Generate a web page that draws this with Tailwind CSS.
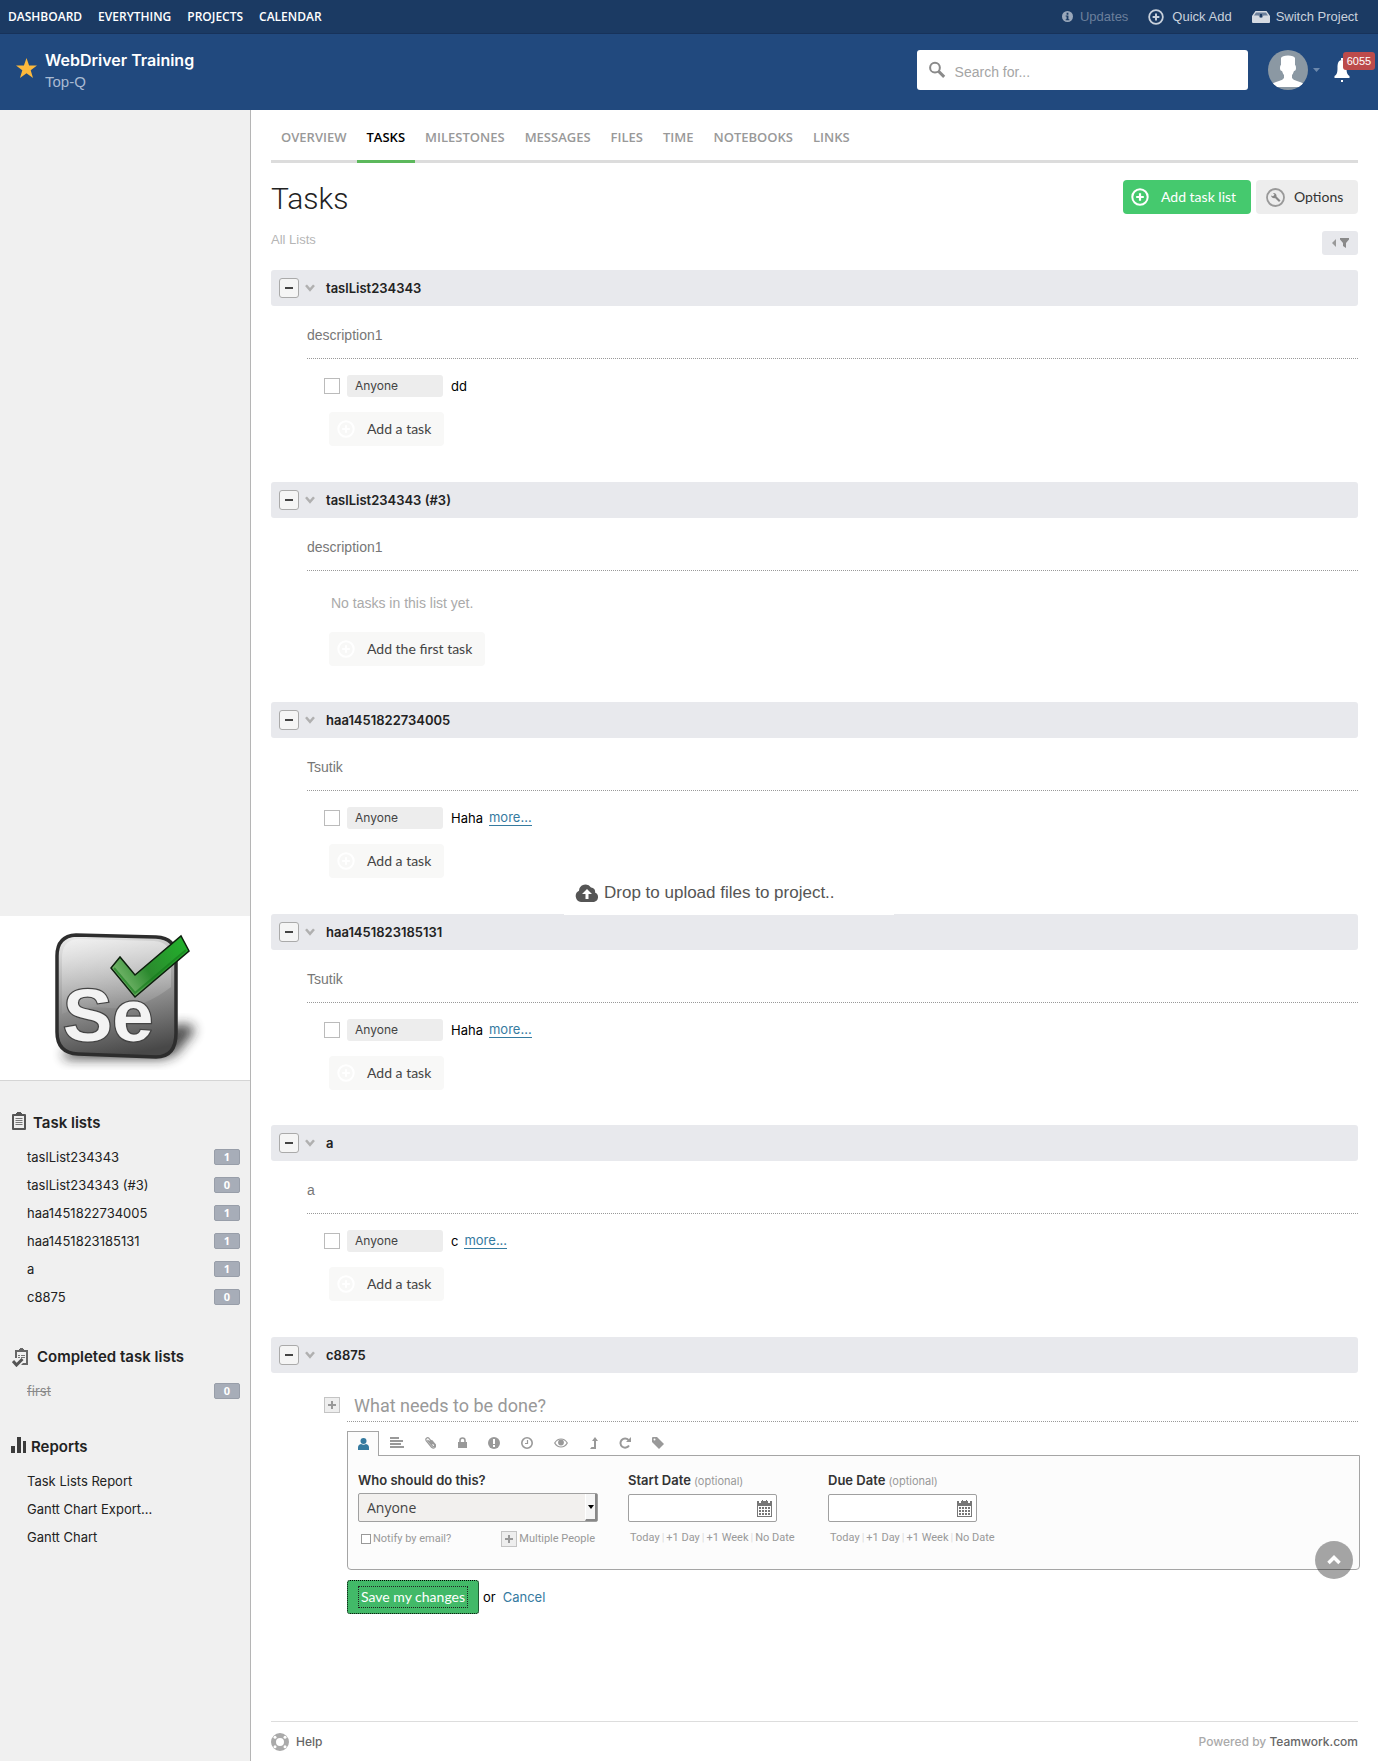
<!DOCTYPE html>
<html lang="en">
<head>
<meta charset="utf-8">
<meta name="viewport" content="width=device-width, initial-scale=1">
<title>Tasks - WebDriver Training</title>
<script src="https://cdn.jsdelivr.net/npm/@tailwindcss/browser@4"></script>
</head>
<body class="relative flex min-h-screen flex-col bg-white font-['Inter',sans-serif] text-[13px] leading-5 text-[#222]">

<!-- Shared icons -->
<svg class="hidden">
  <symbol id="plus-circle" viewBox="0 0 18 18"><circle cx="9" cy="9" r="7.7" fill="none" stroke="currentColor" stroke-width="2"/><path d="M9 5.2v7.6M5.2 9h7.6" stroke="currentColor" stroke-width="2.2"/></symbol>
  <symbol id="chevron" viewBox="0 0 10 8"><path d="M1 1.2l4 4.6 4-4.6" fill="none" stroke="currentColor" stroke-width="2.500"/></symbol>
  <symbol id="minus" viewBox="0 0 8 2"><path d="M0 0h8v2H0z" fill="currentColor"/></symbol>
  <symbol id="plus" viewBox="0 0 8 8"><path d="M3 0h2v3h3v2H5v3H3V5H0V3h3z" fill="currentColor"/></symbol>
  <symbol id="calendar" viewBox="0 0 15 17"><path d="M0 1h2v2h2V1h1V0h1v1h3V0h1v1h1v2h2V1h2v16H0z" fill="#777"/><path d="M1 6h13v10H1z" fill="#fff"/><path d="M2 7h2v2H2zM5 7h2v2H5zM8 7h2v2H8zM11 7h2v2h-2zM2 10h2v2H2zM5 10h2v2H5zM8 10h2v2H8zM11 10h2v2h-2zM2 13h2v2H2zM5 13h2v2H5zM8 13h2v2H8zM11 13h2v2h-2z" fill="#777"/></symbol>
</svg>

<!-- Top bar -->
<nav class="flex h-[34px] items-center justify-between border-b border-[#17325a] bg-[#1b3a63] pr-5 pl-2 text-white">
  <div class="flex gap-4 font-['Open_Sans',sans-serif] text-xs font-semibold">
    <a href="#">DASHBOARD</a><a href="#">EVERYTHING</a><a href="#">PROJECTS</a><a href="#">CALENDAR</a>
  </div>
  <div class="flex items-center font-['Liberation_Sans',sans-serif] text-[13px] text-[#c9d1dc]">
    <a href="#" class="mr-5 flex items-center gap-[7px] text-[#6b7f9b]">
      <svg class="size-[11px]" viewBox="0 0 12 12"><circle cx="6" cy="6" r="6" fill="#9aa8bb"/><path d="M5 2h2v2H5zM4 5h3v4h1v1H4V9h1V6H4z" fill="#1b3a63"/></svg>Updates</a>
    <a href="#" class="mr-5 flex items-center gap-2"><svg class="size-4"><use href="#plus-circle"/></svg>Quick Add</a>
    <a href="#" class="flex items-center gap-[6px]">
      <svg class="h-3 w-[18px]" viewBox="0 0 18 12"><path d="M3.500 0h11L18 5v6a1 1 0 0 1-1 1H1a1 1 0 0 1-1-1V5z" fill="#d5dae2"/><path d="M4 1.500h10l2 3h-4.500L10 7H8L6.500 4.500H2z" fill="#6b7f9b"/><path d="M8 3h2v3H8z" fill="#1b3a63"/></svg>Switch Project</a>
  </div>
</nav>

<!-- Project header -->
<header class="flex h-[76px] items-start justify-between bg-[#21497e] pt-4">
  <div class="flex pl-4">
    <svg class="mt-2 h-5 w-[21px]" viewBox="0 0 21 20"><path d="M10.500 0l2.600 7.400H21l-6.300 4.800L17 20l-6.500-4.700L4 20l2.300-7.800L0 7.400h7.900z" fill="#fdb93c"/></svg>
    <div class="ml-2">
      <h2 class="text-base leading-5 font-semibold text-white">WebDriver Training</h2>
      <p class="font-['Liberation_Sans',sans-serif] text-[15px] leading-6 text-[#a9bad2]">Top-Q</p>
    </div>
  </div>
  <div class="flex items-center">
    <label class="flex h-10 w-[331px] items-center gap-[9px] rounded-[3px] bg-white pl-3">
      <svg class="size-[18px]" viewBox="0 0 18 18" fill="none" stroke="#8a8a8a"><circle cx="6.500" cy="6.500" r="5.300" stroke-width="2.200"/><path d="M10.500 10.500l6 6" stroke-width="3.200"/></svg>
      <input type="text" aria-label="Search" placeholder="Search for..." class="w-full bg-transparent pt-1 font-['Liberation_Sans',sans-serif] text-sm text-[#555] outline-none placeholder:text-[#a5a5a5]">
    </label>
    <button type="button" aria-label="Profile" class="ml-5 flex items-center gap-[5px]">
      <svg class="size-10" viewBox="0 0 40 40"><clipPath id="face"><circle cx="20" cy="20" r="20"/></clipPath><g clip-path="url(#face)"><path d="M0 0h40v40H0z" fill="#8b98a3"/><path d="M13 8q1-2.500 7-2.500T27 8v7q1 0 1 3t-2 3q-1 3-2 4v3q1 2 5 3 8 2 10 6H1q2-4 10-6 4-1 5-3v-3q-1-1-2-4-2 0-2-3t1-3z" fill="#fff"/></g></svg>
      <svg class="h-1 w-[7px]" viewBox="0 0 7 4"><path d="M0 0h7L3.500 4z" fill="#6c88ac"/></svg>
    </button>
    <button type="button" aria-label="Notifications" class="relative ml-[14px] flex h-10 w-[44px] items-center">
      <svg class="h-6 w-4" viewBox="0 0 15 24" fill="#fff"><path d="M6.500 0h2v2h-2zM7.500 2c4 0 4.500 4 4.500 8 0 5 1 7 3 8v2H0v-2c2-1 3-3 3-8 0-4 .5-8 4.500-8zM6.500 22h2v2h-2z"/></svg>
      <span class="absolute top-[2px] right-[3px] flex h-[18px] w-8 items-center justify-center rounded-[3px] bg-[#bc4b4b] font-['Liberation_Sans',sans-serif] text-[11px] text-white">6055</span>
    </button>
  </div>
</header>

<div class="flex grow">
  <!-- Sidebar -->
  <aside class="w-[251px] shrink-0 border-r border-[#b5b5b5] bg-[#f0f0f0]">
    <div class="mt-[806px] border-b border-[#d5d5d5] bg-white">
      <svg class="block h-[164px] w-[250px]" viewBox="0 0 250 164" role="img" aria-label="Selenium">
        <defs>
          <linearGradient id="metal" x1="0.300" y1="0" x2="0.500" y2="1"><stop offset="0" stop-color="#e6e6e6"/><stop offset=".5" stop-color="#999"/><stop offset="1" stop-color="#484848"/></linearGradient>
          <linearGradient id="shine" x1="0" y1="0" x2="0" y2="1"><stop offset="0" stop-color="#fff" stop-opacity=".4"/><stop offset="1" stop-color="#fff" stop-opacity="0.050"/></linearGradient>
          <linearGradient id="green" x1="0" y1="0.500" x2="1" y2="0"><stop offset="0" stop-color="#74b56b"/><stop offset=".35" stop-color="#2b8a2e"/><stop offset="1" stop-color="#21b52b"/></linearGradient>
          <filter id="soft" x="-30%" y="-30%" width="160%" height="160%"><feGaussianBlur stdDeviation="6"/></filter>
        </defs>
        <path d="M62 136l120-28q14 0 12 8l-18 22-14 5H66z" fill="#222" opacity=".8" filter="url(#soft)"/>
        <path d="M76 19l80 2q20 1 20 20v76q0 24-20 24l-78-3q-21-1-21-22V40q0-20 19-21z" fill="url(#metal)" stroke="#2d2d2d" stroke-width="3.500"/>
        <path d="M78 23l76 2q17 1 17 18v28Q140 95 110 92T62 98V42q0-18 16-19z" fill="url(#shine)"/>
        <text x="63" y="125" font-family="Liberation Sans, sans-serif" font-size="74" font-weight="700" fill="#f3f3f3" stroke="#444" stroke-width="2.500" paint-order="stroke">Se</text>
        <path d="M120 41l-9 11 24 29 54-46-8-15-46 39z" fill="url(#green)" stroke="#0c1f0c" stroke-width="1.500"/>
        <path d="M114 52l21 25 51-43" fill="none" stroke="#147a1b" stroke-width="2" opacity=".6"/>
      </svg>
    </div>

    <section class="pt-8">
      <h3 class="flex h-5 items-center pl-3 text-[15px] font-semibold">
        <svg class="mr-[7px] mb-1 h-[18px] w-[14px]" viewBox="0 0 14 18"><path d="M1 2h3V1h1V0h4v1h1v1h3a1 1 0 0 1 1 1v14a1 1 0 0 1-1 1H1a1 1 0 0 1-1-1V3a1 1 0 0 1 1-1z" fill="#555"/><path d="M2 4h10v12H2z" fill="#eee"/><path d="M3.500 6.500h7M3.500 8.500h7M3.500 10.500h7M3.500 12.500h7" stroke="#777"/></svg>Task lists</h3>
      <ul class="mt-[10px] pr-[10px] pl-[27px]">
        <li class="flex h-7 items-center justify-between"><a href="#">taslList234343</a><span class="h-4 w-[26px] rounded-[2px] border border-[#989ea9] bg-[#a7adb8] text-center font-['Noto_Sans',sans-serif] text-[11px] leading-[14px] font-bold text-white">1</span></li>
        <li class="flex h-7 items-center justify-between"><a href="#">taslList234343 (#3)</a><span class="h-4 w-[26px] rounded-[2px] border border-[#989ea9] bg-[#a7adb8] text-center font-['Noto_Sans',sans-serif] text-[11px] leading-[14px] font-bold text-white">0</span></li>
        <li class="flex h-7 items-center justify-between"><a href="#">haa1451822734005</a><span class="h-4 w-[26px] rounded-[2px] border border-[#989ea9] bg-[#a7adb8] text-center font-['Noto_Sans',sans-serif] text-[11px] leading-[14px] font-bold text-white">1</span></li>
        <li class="flex h-7 items-center justify-between"><a href="#">haa1451823185131</a><span class="h-4 w-[26px] rounded-[2px] border border-[#989ea9] bg-[#a7adb8] text-center font-['Noto_Sans',sans-serif] text-[11px] leading-[14px] font-bold text-white">1</span></li>
        <li class="flex h-7 items-center justify-between"><a href="#">a</a><span class="h-4 w-[26px] rounded-[2px] border border-[#989ea9] bg-[#a7adb8] text-center font-['Noto_Sans',sans-serif] text-[11px] leading-[14px] font-bold text-white">1</span></li>
        <li class="flex h-7 items-center justify-between"><a href="#">c8875</a><span class="h-4 w-[26px] rounded-[2px] border border-[#989ea9] bg-[#a7adb8] text-center font-['Noto_Sans',sans-serif] text-[11px] leading-[14px] font-bold text-white">0</span></li>
      </ul>
    </section>
    <section class="pt-9">
      <h3 class="flex h-5 items-center pl-3 text-[15px] font-semibold">
        <svg class="mr-2 h-[19px] w-[17px]" viewBox="0 0 17 19"><path d="M4 2h3V1h1V0h3v1h1v1h4v15H9l2-2h3V4H5v6H3V2z" fill="#666"/><path d="M6 7.500h2M9 7.500h4M6 9.500h2M9 9.500h4" stroke="#777"/><path d="M1 13l3.500 4 6-6" fill="none" stroke="#555" stroke-width="3"/></svg>Completed task lists</h3>
      <ul class="mt-[10px] pr-[10px] pl-[27px]">
        <li class="flex h-7 items-center justify-between"><a href="#" class="text-[#8a8a8a] line-through">first</a><span class="h-4 w-[26px] rounded-[2px] border border-[#989ea9] bg-[#a7adb8] text-center font-['Noto_Sans',sans-serif] text-[11px] leading-[14px] font-bold text-white">0</span></li>
      </ul>
    </section>
    <section class="pt-8">
      <h3 class="flex h-5 items-center pl-[11px] text-[15px] font-semibold">
        <svg class="mr-[5px] mb-1 h-4 w-[15px]" viewBox="0 0 15 16" fill="#3c3c3c"><path d="M0 9h4v7H0zM6 0h4v16H6zM12 4h3v12h-3z"/></svg>Reports</h3>
      <ul class="mt-[10px] pl-[27px]">
        <li class="flex h-7 items-center"><a href="#">Task Lists Report</a></li>
        <li class="flex h-7 items-center"><a href="#">Gantt Chart Export...</a></li>
        <li class="flex h-7 items-center"><a href="#">Gantt Chart</a></li>
      </ul>
    </section>
  </aside>

  <main class="flex min-w-0 grow flex-col px-5">
    <!-- Project tabs -->
    <nav class="flex h-[53px] border-b-3 border-[#dcdcdc] font-['Open_Sans',sans-serif] text-[13px] font-semibold text-[#999]">
      <a href="#" class="px-[10px] pt-[17px]">OVERVIEW</a>
      <a href="#" class="-mb-[3px] border-b-3 border-[#5cb85c] px-[10px] pt-[17px] text-black">TASKS</a>
      <a href="#" class="px-[10px] pt-[17px]">MILESTONES</a>
      <a href="#" class="px-[10px] pt-[17px]">MESSAGES</a>
      <a href="#" class="px-[10px] pt-[17px]">FILES</a>
      <a href="#" class="px-[10px] pt-[17px]">TIME</a>
      <a href="#" class="px-[10px] pt-[17px]">NOTEBOOKS</a>
      <a href="#" class="px-[10px] pt-[17px]">LINKS</a>
    </nav>

    <div class="mt-[17px] flex h-[34px] items-center justify-between">
      <h1 class="pt-1 font-['Roboto',sans-serif] text-[30px] leading-9 font-light text-[#222]">Tasks</h1>
      <div class="flex gap-[5px] font-['Lato',sans-serif] text-sm">
        <button type="button" class="flex h-[34px] w-32 items-center rounded bg-[#45c96e] pl-2 text-white"><svg class="mr-3 size-[18px]"><use href="#plus-circle"/></svg>Add task list</button>
        <button type="button" class="flex h-[34px] w-[102px] items-center rounded bg-[#ededed] pl-[10px] text-[#333]">
          <svg class="mr-[9px] size-[19px]" viewBox="0 0 19 19"><circle cx="9.500" cy="9.500" r="8.500" fill="none" stroke="#999" stroke-width="1.800"/><path d="M5 7.500a3 3 0 0 0 4 2.500l4 4 1.500-1.500-4-4A3 3 0 0 0 7 5l1.500 1.800-1.500 1.500z" fill="#888"/></svg>Options</button>
      </div>
    </div>
    <div class="mt-[17px] flex h-6 items-center justify-between">
      <p class="pb-[6px] font-['Liberation_Sans',sans-serif] text-[13px] text-[#b5b5b5]">All Lists</p>
      <button type="button" aria-label="Filter" class="flex h-6 w-9 items-center justify-center gap-1 rounded-[3px] bg-[#e7e8ec]">
        <svg class="h-2 w-1" viewBox="0 0 4 8"><path d="M4 0v8L0 4z" fill="#999"/></svg><svg class="h-[10px] w-[9px]" viewBox="0 0 9 10"><path d="M0 0h9v1.500L6 5v5L3 8V5L0 1.500z" fill="#8a8a8a"/></svg></button>
    </div>

    <!-- Task lists -->
    <div class="mt-[15px]">
      <section class="pb-9">
        <header class="flex h-9 items-center rounded-[3px] bg-[#e8e9ed] pl-2">
          <button type="button" aria-label="Collapse" class="flex size-5 items-center justify-center rounded-[3px] border border-[#aaa] bg-[#f5f5f5] text-[#444]"><svg class="h-[2px] w-2"><use href="#minus"/></svg></button>
          <svg class="ml-[6px] mr-[11px] h-2 w-[10px] text-[#b0b0b0]"><use href="#chevron"/></svg>
          <h4 class="font-semibold">taslList234343</h4>
        </header>
        <p class="ml-9 flex h-[53px] items-center border-b border-dotted border-[#999] pt-[6px] font-['Liberation_Sans',sans-serif] text-sm text-[#777]">description1</p>
        <div class="mt-4 flex h-[22px] items-center pl-[53px]">
          <input type="checkbox" aria-label="Complete dd" class="size-4 appearance-none border border-[#bbb] bg-white">
          <button type="button" class="ml-[7px] h-[22px] w-24 rounded-[3px] bg-[#ededed] pl-2 text-left text-xs text-[#444]">Anyone</button>
          <a href="#" class="ml-2 text-black">dd</a>
        </div>
        <button type="button" class="mt-[15px] ml-[58px] flex h-[34px] items-center rounded bg-[#f8f8f7] pr-[13px] pl-2 font-['Lato',sans-serif] text-sm text-[#444]"><svg class="mr-3 size-[18px] text-white"><use href="#plus-circle"/></svg>Add a task</button>
      </section>

      <section class="pb-9">
        <header class="flex h-9 items-center rounded-[3px] bg-[#e8e9ed] pl-2">
          <button type="button" aria-label="Collapse" class="flex size-5 items-center justify-center rounded-[3px] border border-[#aaa] bg-[#f5f5f5] text-[#444]"><svg class="h-[2px] w-2"><use href="#minus"/></svg></button>
          <svg class="ml-[6px] mr-[11px] h-2 w-[10px] text-[#b0b0b0]"><use href="#chevron"/></svg>
          <h4 class="font-semibold">taslList234343 (#3)</h4>
        </header>
        <p class="ml-9 flex h-[53px] items-center border-b border-dotted border-[#999] pt-[6px] font-['Liberation_Sans',sans-serif] text-sm text-[#777]">description1</p>
        <p class="mt-[22px] ml-[60px] font-['Liberation_Sans',sans-serif] text-sm leading-5 text-[#aaa]">No tasks in this list yet.</p>
        <button type="button" class="mt-[19px] ml-[58px] flex h-[34px] items-center rounded bg-[#f8f8f7] pr-[13px] pl-2 font-['Lato',sans-serif] text-sm text-[#444]"><svg class="mr-3 size-[18px] text-white"><use href="#plus-circle"/></svg>Add the first task</button>
      </section>

      <section class="pb-9">
        <header class="flex h-9 items-center rounded-[3px] bg-[#e8e9ed] pl-2">
          <button type="button" aria-label="Collapse" class="flex size-5 items-center justify-center rounded-[3px] border border-[#aaa] bg-[#f5f5f5] text-[#444]"><svg class="h-[2px] w-2"><use href="#minus"/></svg></button>
          <svg class="ml-[6px] mr-[11px] h-2 w-[10px] text-[#b0b0b0]"><use href="#chevron"/></svg>
          <h4 class="font-semibold">haa1451822734005</h4>
        </header>
        <p class="ml-9 flex h-[53px] items-center border-b border-dotted border-[#999] pt-[6px] font-['Liberation_Sans',sans-serif] text-sm text-[#777]">Tsutik</p>
        <div class="mt-4 flex h-[22px] items-center pl-[53px]">
          <input type="checkbox" aria-label="Complete Haha" class="size-4 appearance-none border border-[#bbb] bg-white">
          <button type="button" class="ml-[7px] h-[22px] w-24 rounded-[3px] bg-[#ededed] pl-2 text-left text-xs text-[#444]">Anyone</button>
          <a href="#" class="ml-2 text-black">Haha</a>
          <a href="#" class="ml-[6px] border-b border-[#357a9f] leading-[15px] text-[#357a9f]">more...</a>
        </div>
        <button type="button" class="mt-[15px] ml-[58px] flex h-[34px] items-center rounded bg-[#f8f8f7] pr-[13px] pl-2 font-['Lato',sans-serif] text-sm text-[#444]"><svg class="mr-3 size-[18px] text-white"><use href="#plus-circle"/></svg>Add a task</button>
      </section>

      <section class="pb-[35px]">
        <header class="flex h-9 items-center rounded-[3px] bg-[#e8e9ed] pl-2">
          <button type="button" aria-label="Collapse" class="flex size-5 items-center justify-center rounded-[3px] border border-[#aaa] bg-[#f5f5f5] text-[#444]"><svg class="h-[2px] w-2"><use href="#minus"/></svg></button>
          <svg class="ml-[6px] mr-[11px] h-2 w-[10px] text-[#b0b0b0]"><use href="#chevron"/></svg>
          <h4 class="font-semibold">haa1451823185131</h4>
        </header>
        <p class="ml-9 flex h-[53px] items-center border-b border-dotted border-[#999] pt-[6px] font-['Liberation_Sans',sans-serif] text-sm text-[#777]">Tsutik</p>
        <div class="mt-4 flex h-[22px] items-center pl-[53px]">
          <input type="checkbox" aria-label="Complete Haha" class="size-4 appearance-none border border-[#bbb] bg-white">
          <button type="button" class="ml-[7px] h-[22px] w-24 rounded-[3px] bg-[#ededed] pl-2 text-left text-xs text-[#444]">Anyone</button>
          <a href="#" class="ml-2 text-black">Haha</a>
          <a href="#" class="ml-[6px] border-b border-[#357a9f] leading-[15px] text-[#357a9f]">more...</a>
        </div>
        <button type="button" class="mt-[15px] ml-[58px] flex h-[34px] items-center rounded bg-[#f8f8f7] pr-[13px] pl-2 font-['Lato',sans-serif] text-sm text-[#444]"><svg class="mr-3 size-[18px] text-white"><use href="#plus-circle"/></svg>Add a task</button>
      </section>

      <section class="pb-9">
        <header class="flex h-9 items-center rounded-[3px] bg-[#e8e9ed] pl-2">
          <button type="button" aria-label="Collapse" class="flex size-5 items-center justify-center rounded-[3px] border border-[#aaa] bg-[#f5f5f5] text-[#444]"><svg class="h-[2px] w-2"><use href="#minus"/></svg></button>
          <svg class="ml-[6px] mr-[11px] h-2 w-[10px] text-[#b0b0b0]"><use href="#chevron"/></svg>
          <h4 class="font-semibold">a</h4>
        </header>
        <p class="ml-9 flex h-[53px] items-center border-b border-dotted border-[#999] pt-[6px] font-['Liberation_Sans',sans-serif] text-sm text-[#777]">a</p>
        <div class="mt-4 flex h-[22px] items-center pl-[53px]">
          <input type="checkbox" aria-label="Complete c" class="size-4 appearance-none border border-[#bbb] bg-white">
          <button type="button" class="ml-[7px] h-[22px] w-24 rounded-[3px] bg-[#ededed] pl-2 text-left text-xs text-[#444]">Anyone</button>
          <a href="#" class="ml-2 text-black">c</a>
          <a href="#" class="ml-[6px] border-b border-[#357a9f] leading-[15px] text-[#357a9f]">more...</a>
        </div>
        <button type="button" class="mt-[15px] ml-[58px] flex h-[34px] items-center rounded bg-[#f8f8f7] pr-[13px] pl-2 font-['Lato',sans-serif] text-sm text-[#444]"><svg class="mr-3 size-[18px] text-white"><use href="#plus-circle"/></svg>Add a task</button>
      </section>

      <section>
        <header class="flex h-9 items-center rounded-[3px] bg-[#e8e9ed] pl-2">
          <button type="button" aria-label="Collapse" class="flex size-5 items-center justify-center rounded-[3px] border border-[#aaa] bg-[#f5f5f5] text-[#444]"><svg class="h-[2px] w-2"><use href="#minus"/></svg></button>
          <svg class="ml-[6px] mr-[11px] h-2 w-[10px] text-[#b0b0b0]"><use href="#chevron"/></svg>
          <h4 class="font-semibold">c8875</h4>
        </header>

        <!-- New task form -->
        <form class="mt-4">
          <div class="flex pl-[53px]">
            <button type="button" aria-label="Add details" class="mt-2 mr-[7px] flex size-4 shrink-0 items-center justify-center border border-[#c4c4c4] bg-[#eee] text-[#999]"><svg class="size-2"><use href="#plus"/></svg></button>
            <input type="text" aria-label="Task name" placeholder="What needs to be done?" class="h-[33px] w-full border-b border-dotted border-[#999] pl-[7px] font-['Roboto',sans-serif] text-lg text-[#444] outline-none placeholder:text-[#999]">
          </div>
          <div class="-mr-[2px] pl-[76px]">
            <div class="mt-[9px] flex h-6 pb-px text-[#999]">
              <button type="button" aria-label="Assign" class="-mb-[2px] flex w-8 items-center justify-center border border-b-0 border-[#a5a5a5] bg-[#fcfcfc]"><svg class="h-3 w-[11px]" viewBox="0 0 11 12" fill="#357a9f"><circle cx="5.500" cy="3" r="3"/><path d="M0 12V9.500Q0 6.500 3 6q2.500 1.500 5 0 3 .5 3 3.500V12z"/></svg></button>
              <div class="ml-[2px] flex gap-px">
              <button type="button" aria-label="Description" class="flex w-8 items-center justify-center"><svg class="h-[11px] w-[14px]" viewBox="0 0 14 11" fill="currentColor"><path d="M0 0h9v2H0zM0 3h13v2H0zM0 6h11v2H0zM0 9h14v2H0z"/></svg></button>
              <button type="button" aria-label="Attach" class="flex w-8 items-center justify-center"><svg class="h-3 w-[11px]" viewBox="0 0 11 12" fill="none" stroke="currentColor" stroke-width="1.200"><path d="M2.500 3l5 6q1 1 1.800.3t0-1.800L4 1.300Q2.800.2 1.500 1.200t-.2 2.700l5.200 6.300q1.800 1.500 3.200.4t.6-3L6.500 3.200M4.500 3.500l3 3.800"/></svg></button>
              <button type="button" aria-label="Privacy" class="flex w-[30px] items-center justify-center"><svg class="h-[11px] w-[9px]" viewBox="0 0 9 11"><path d="M2 5V3.500a2.500 2.500 0 0 1 5 0V5" fill="none" stroke="currentColor" stroke-width="1.600"/><path d="M0 5h9v6H0z" fill="currentColor"/></svg></button>
              <button type="button" aria-label="Priority" class="flex w-8 items-center justify-center"><svg class="size-3" viewBox="0 0 12 12"><circle cx="6" cy="6" r="6" fill="currentColor"/><path d="M5 2h2v5H5zM5 8h2v2H5z" fill="#fff"/></svg></button>
              <button type="button" aria-label="Estimated time" class="flex w-8 items-center justify-center"><svg class="size-3" viewBox="0 0 12 12" fill="none" stroke="currentColor"><circle cx="6" cy="6" r="5.200" stroke-width="1.600"/><path d="M6.500 3v3.500H4" stroke-width="1.200"/></svg></button>
              <button type="button" aria-label="Followers" class="flex w-[34px] items-center justify-center"><svg class="h-[10px] w-[14px]" viewBox="0 0 14 10"><path d="M.7 5Q3 1 7 1t6.300 4Q11 9 7 9T.7 5z" fill="none" stroke="currentColor" stroke-width="1.200"/><circle cx="7" cy="4.500" r="2.900" fill="currentColor"/></svg></button>
              <button type="button" aria-label="Dependencies" class="flex w-[30px] items-center justify-center"><svg class="h-3 w-2" viewBox="0 0 8 12" fill="currentColor"><path d="M5 0l3 4H6v8H0l1.500-2H4V4H2z"/></svg></button>
              <button type="button" aria-label="Repeat" class="flex w-[30px] items-center justify-center"><svg class="size-3" viewBox="0 0 12 12"><path d="M10 8.500A4.600 4.600 0 1 1 9.500 3" fill="none" stroke="currentColor" stroke-width="2"/><path d="M12 0v5H7z" fill="currentColor"/></svg></button>
              <button type="button" aria-label="Tags" class="flex w-[34px] items-center justify-center"><svg class="size-3" viewBox="0 0 12 12"><path d="M0 1q0-1 1-1h4l7 7-5 5-7-7z" fill="currentColor"/><circle cx="2.500" cy="2.500" r="1" fill="#fff"/></svg></button>
              </div>
            </div>
            <div class="flex h-[115px] rounded-b border border-[#a5a5a5] bg-[#fcfcfc] pt-[14px] pl-[10px] font-['Roboto',sans-serif] text-[11px] text-[#999]">
              <div class="w-[270px]">
                <label for="who" class="block font-['Inter',sans-serif] text-[13px] font-semibold text-[#333]">Who should do this?</label>
                <div class="relative mt-[3px] w-60">
                  <select id="who" class="block h-[29px] w-60 appearance-none rounded-[2px] border border-[#a0a0a0] bg-[#f2f0ee] pl-2 font-['Open_Sans',sans-serif] text-sm text-[#444]"><option>Anyone</option></select>
                  <span class="pointer-events-none absolute top-px right-px flex h-[27px] w-3 items-center justify-center border-r-2 border-b-2 border-l border-[#888] border-l-white bg-[#f5f5f5]"><svg class="h-1 w-[6px]" viewBox="0 0 6 4"><path d="M0 0h6L3 4z"/></svg></span>
                </div>
                <div class="mt-[7px] flex w-[237px] items-center justify-between">
                  <label class="flex items-center gap-[2px] pl-[3px]"><input type="checkbox" class="size-[10px] appearance-none border border-[#999] bg-white">Notify by email?</label>
                  <button type="button" class="flex items-center gap-[2px]"><span class="flex size-4 items-center justify-center border border-[#c4c4c4] bg-[#eee]"><svg class="size-2"><use href="#plus"/></svg></span>Multiple People</button>
                </div>
              </div>
              <div class="w-[200px]">
                <label for="start" class="block font-['Inter',sans-serif] text-[11px]"><span class="text-[13px] font-semibold text-[#333]">Start Date</span> (optional)</label>
                <div class="mt-[3px] flex h-7 w-[149px] items-center rounded-[2px] border border-[#a0a0a0] bg-white pr-1"><input id="start" type="text" class="w-full min-w-0 grow px-1 outline-none"><svg class="h-[17px] w-[15px] shrink-0"><use href="#calendar"/></svg></div>
                <div class="mt-[6px] flex gap-[2px] pl-[2px] whitespace-nowrap"><a href="#">Today</a><span class="text-[#ddd]">|</span><a href="#">+1 Day</a><span class="text-[#ddd]">|</span><a href="#">+1 Week</a><span class="text-[#ddd]">|</span><a href="#">No Date</a></div>
              </div>
              <div class="w-[200px]">
                <label for="due" class="block font-['Inter',sans-serif] text-[11px]"><span class="text-[13px] font-semibold text-[#333]">Due Date</span> (optional)</label>
                <div class="mt-[3px] flex h-7 w-[149px] items-center rounded-[2px] border border-[#a0a0a0] bg-white pr-1"><input id="due" type="text" class="w-full min-w-0 grow px-1 outline-none"><svg class="h-[17px] w-[15px] shrink-0"><use href="#calendar"/></svg></div>
                <div class="mt-[6px] flex gap-[2px] pl-[2px] whitespace-nowrap"><a href="#">Today</a><span class="text-[#ddd]">|</span><a href="#">+1 Day</a><span class="text-[#ddd]">|</span><a href="#">+1 Week</a><span class="text-[#ddd]">|</span><a href="#">No Date</a></div>
              </div>
            </div>
            <div class="mt-[10px] flex items-center">
              <button type="submit" class="flex h-[34px] w-[132px] items-center justify-center rounded-[3px] border border-dotted border-black bg-[#42b968] font-['Lato',sans-serif] text-sm text-white"><span class="border border-dotted border-[#222] px-[2px]">Save my changes</span></button>
              <span class="mx-1 text-black">or</span>
              <a href="#" class="ml-[3px] text-[#357a9f]">Cancel</a>
            </div>
          </div>
        </form>
      </section>
    </div>

    <footer class="mt-auto flex h-10 items-center justify-between border-t border-[#ddd] text-xs font-medium text-[#666]">
      <a href="#" class="flex items-center gap-[7px]"><svg class="size-[18px]" viewBox="0 0 18 18"><circle cx="9" cy="9" r="6.500" fill="none" stroke="#aaa" stroke-width="5"/><circle cx="4" cy="4.200" r="1.500" fill="#fff"/><circle cx="14" cy="4.200" r="1.500" fill="#fff"/><circle cx="4" cy="13.800" r="1.500" fill="#fff"/><circle cx="14" cy="13.800" r="1.500" fill="#fff"/></svg>Help</a>
      <p class="text-[#aaa]">Powered by <a href="#" class="text-[#666]">Teamwork.com</a></p>
    </footer>
  </main>
</div>

<!-- File drop hint, floating over the lists -->
<div class="absolute top-[870px] left-[564px] flex h-[45px] w-[330px] items-center gap-[5px] bg-white pl-[11px] font-['Liberation_Sans',sans-serif] text-[17px] text-[#555]">
  <svg class="h-[18px] w-6" viewBox="0 0 24 18"><path d="M6 18a6 6 0 0 1-2-11.300A6.500 6.500 0 0 1 16 3.500 4 4 0 0 1 20 8.500 5 5 0 0 1 19 18z" fill="#555"/><path d="M12 5l5 5h-3.500v5h-3v-5H7z" fill="#fff"/></svg>Drop to upload files to project..
</div>

<button type="button" aria-label="Back to top" class="fixed right-[25px] bottom-[182px] flex size-[38px] items-center justify-center rounded-full bg-black/35"><svg class="h-[10px] w-[14px]" viewBox="0 0 14 10"><path d="M1.500 8L7 2.500 12.500 8" fill="none" stroke="#fff" stroke-width="3.500"/></svg></button>
</body>
</html>
